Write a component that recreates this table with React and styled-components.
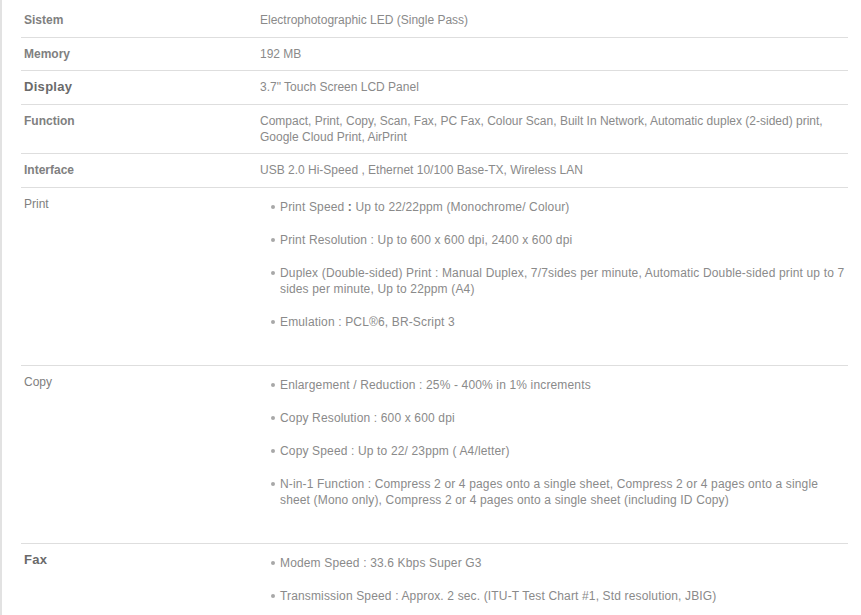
import React from "react";
import styled, { createGlobalStyle } from "styled-components";

const GlobalStyle = createGlobalStyle`
  html, body {
    margin: 0;
    padding: 0;
    background: #ffffff;
  }
  body {
    font-family: "Liberation Sans", Arial, sans-serif;
  }
`;

const Page = styled.div`
  width: 861px;
  height: 615px;
  overflow: hidden;
  box-sizing: border-box;
  padding: 4px 13px 0 19px;
  border-left: 2px solid #e2e2e2;
`;

const Table = styled.div`
  display: flex;
  flex-direction: column;
`;

const Row = styled.div`
  display: grid;
  grid-template-columns: 239px 1fr;
  border-bottom: 1px solid #dedede;
  padding: 8.25px 0;
  font-size: 12px;
  line-height: 16px;
`;

const Label = styled.div`
  padding-left: 3px;
  color: ${(p) => (p.$weight === "heavy" ? "#6a6a6a" : "#808080")};
  font-weight: ${(p) => (p.$weight === "normal" ? 400 : 700)};
  font-size: ${(p) => (p.$weight === "heavy" ? "13px" : "12px")};
  letter-spacing: ${(p) => (p.$weight === "heavy" ? "0.3px" : "0")};
`;

const Value = styled.div`
  color: #8a8a8a;
`;

const List = styled.ul`
  display: flex;
  flex-direction: column;
  gap: 17px;
  margin: 3px 0 26.5px;
  padding: 0 0 0 20px;
  list-style: none;
`;

const Item = styled.li`
  position: relative;
  letter-spacing: 0.15px;
  &::before {
    content: "";
    position: absolute;
    left: -9px;
    top: 6px;
    width: 4px;
    height: 4px;
    border-radius: 50%;
    background: #a8a8a8;
  }
`;

const Strong = styled.b`
  color: #6f6f6f;
`;

const specs = [
  { label: "Sistem", weight: "bold", value: "Electrophotographic LED (Single Pass)" },
  { label: "Memory", weight: "bold", value: "192 MB" },
  { label: "Display", weight: "heavy", value: "3.7\" Touch Screen LCD Panel" },
  {
    label: "Function",
    weight: "bold",
    value:
      "Compact, Print, Copy, Scan, Fax, PC Fax, Colour Scan, Built In Network, Automatic duplex (2-sided) print, Google Cloud Print, AirPrint",
  },
  { label: "Interface", weight: "bold", value: "USB 2.0 Hi-Speed , Ethernet 10/100 Base-TX, Wireless LAN" },
  {
    label: "Print",
    weight: "normal",
    items: [
      ["Print Speed", "Up to 22/22ppm (Monochrome/ Colour)", true],
      ["Print Resolution", "Up to 600 x 600 dpi, 2400 x 600 dpi"],
      [
        "Duplex (Double-sided) Print",
        "Manual Duplex, 7/7sides per minute, Automatic Double-sided print up to 7 sides per minute, Up to 22ppm (A4)",
      ],
      ["Emulation", "PCL®6, BR-Script 3"],
    ],
  },
  {
    label: "Copy",
    weight: "normal",
    items: [
      ["Enlargement / Reduction", "25% - 400% in 1% increments"],
      ["Copy Resolution", "600 x 600 dpi"],
      ["Copy Speed", "Up to 22/ 23ppm ( A4/letter)"],
      [
        "N-in-1 Function",
        "Compress 2 or 4 pages onto a single sheet, Compress 2 or 4 pages onto a single sheet (Mono only), Compress 2 or 4 pages onto a single sheet (including ID Copy)",
      ],
    ],
  },
  {
    label: "Fax",
    weight: "heavy",
    items: [
      ["Modem Speed", "33.6 Kbps Super G3"],
      ["Transmission Speed", "Approx. 2 sec. (ITU-T Test Chart #1, Std resolution, JBIG)"],
    ],
  },
];

function SpecRow({ spec }) {
  return (
    <Row>
      <Label $weight={spec.weight}>{spec.label}</Label>
      <Value>
        {spec.items ? (
          <List>
            {spec.items.map(([name, text, boldColon]) => (
              <Item key={name}>
                {name} {boldColon ? <Strong>:</Strong> : ":"} {text}
              </Item>
            ))}
          </List>
        ) : (
          spec.value
        )}
      </Value>
    </Row>
  );
}

export default function App() {
  return (
    <>
      <GlobalStyle />
      <Page>
        <Table>
          {specs.map((spec) => (
            <SpecRow key={spec.label} spec={spec} />
          ))}
        </Table>
      </Page>
    </>
  );
}
